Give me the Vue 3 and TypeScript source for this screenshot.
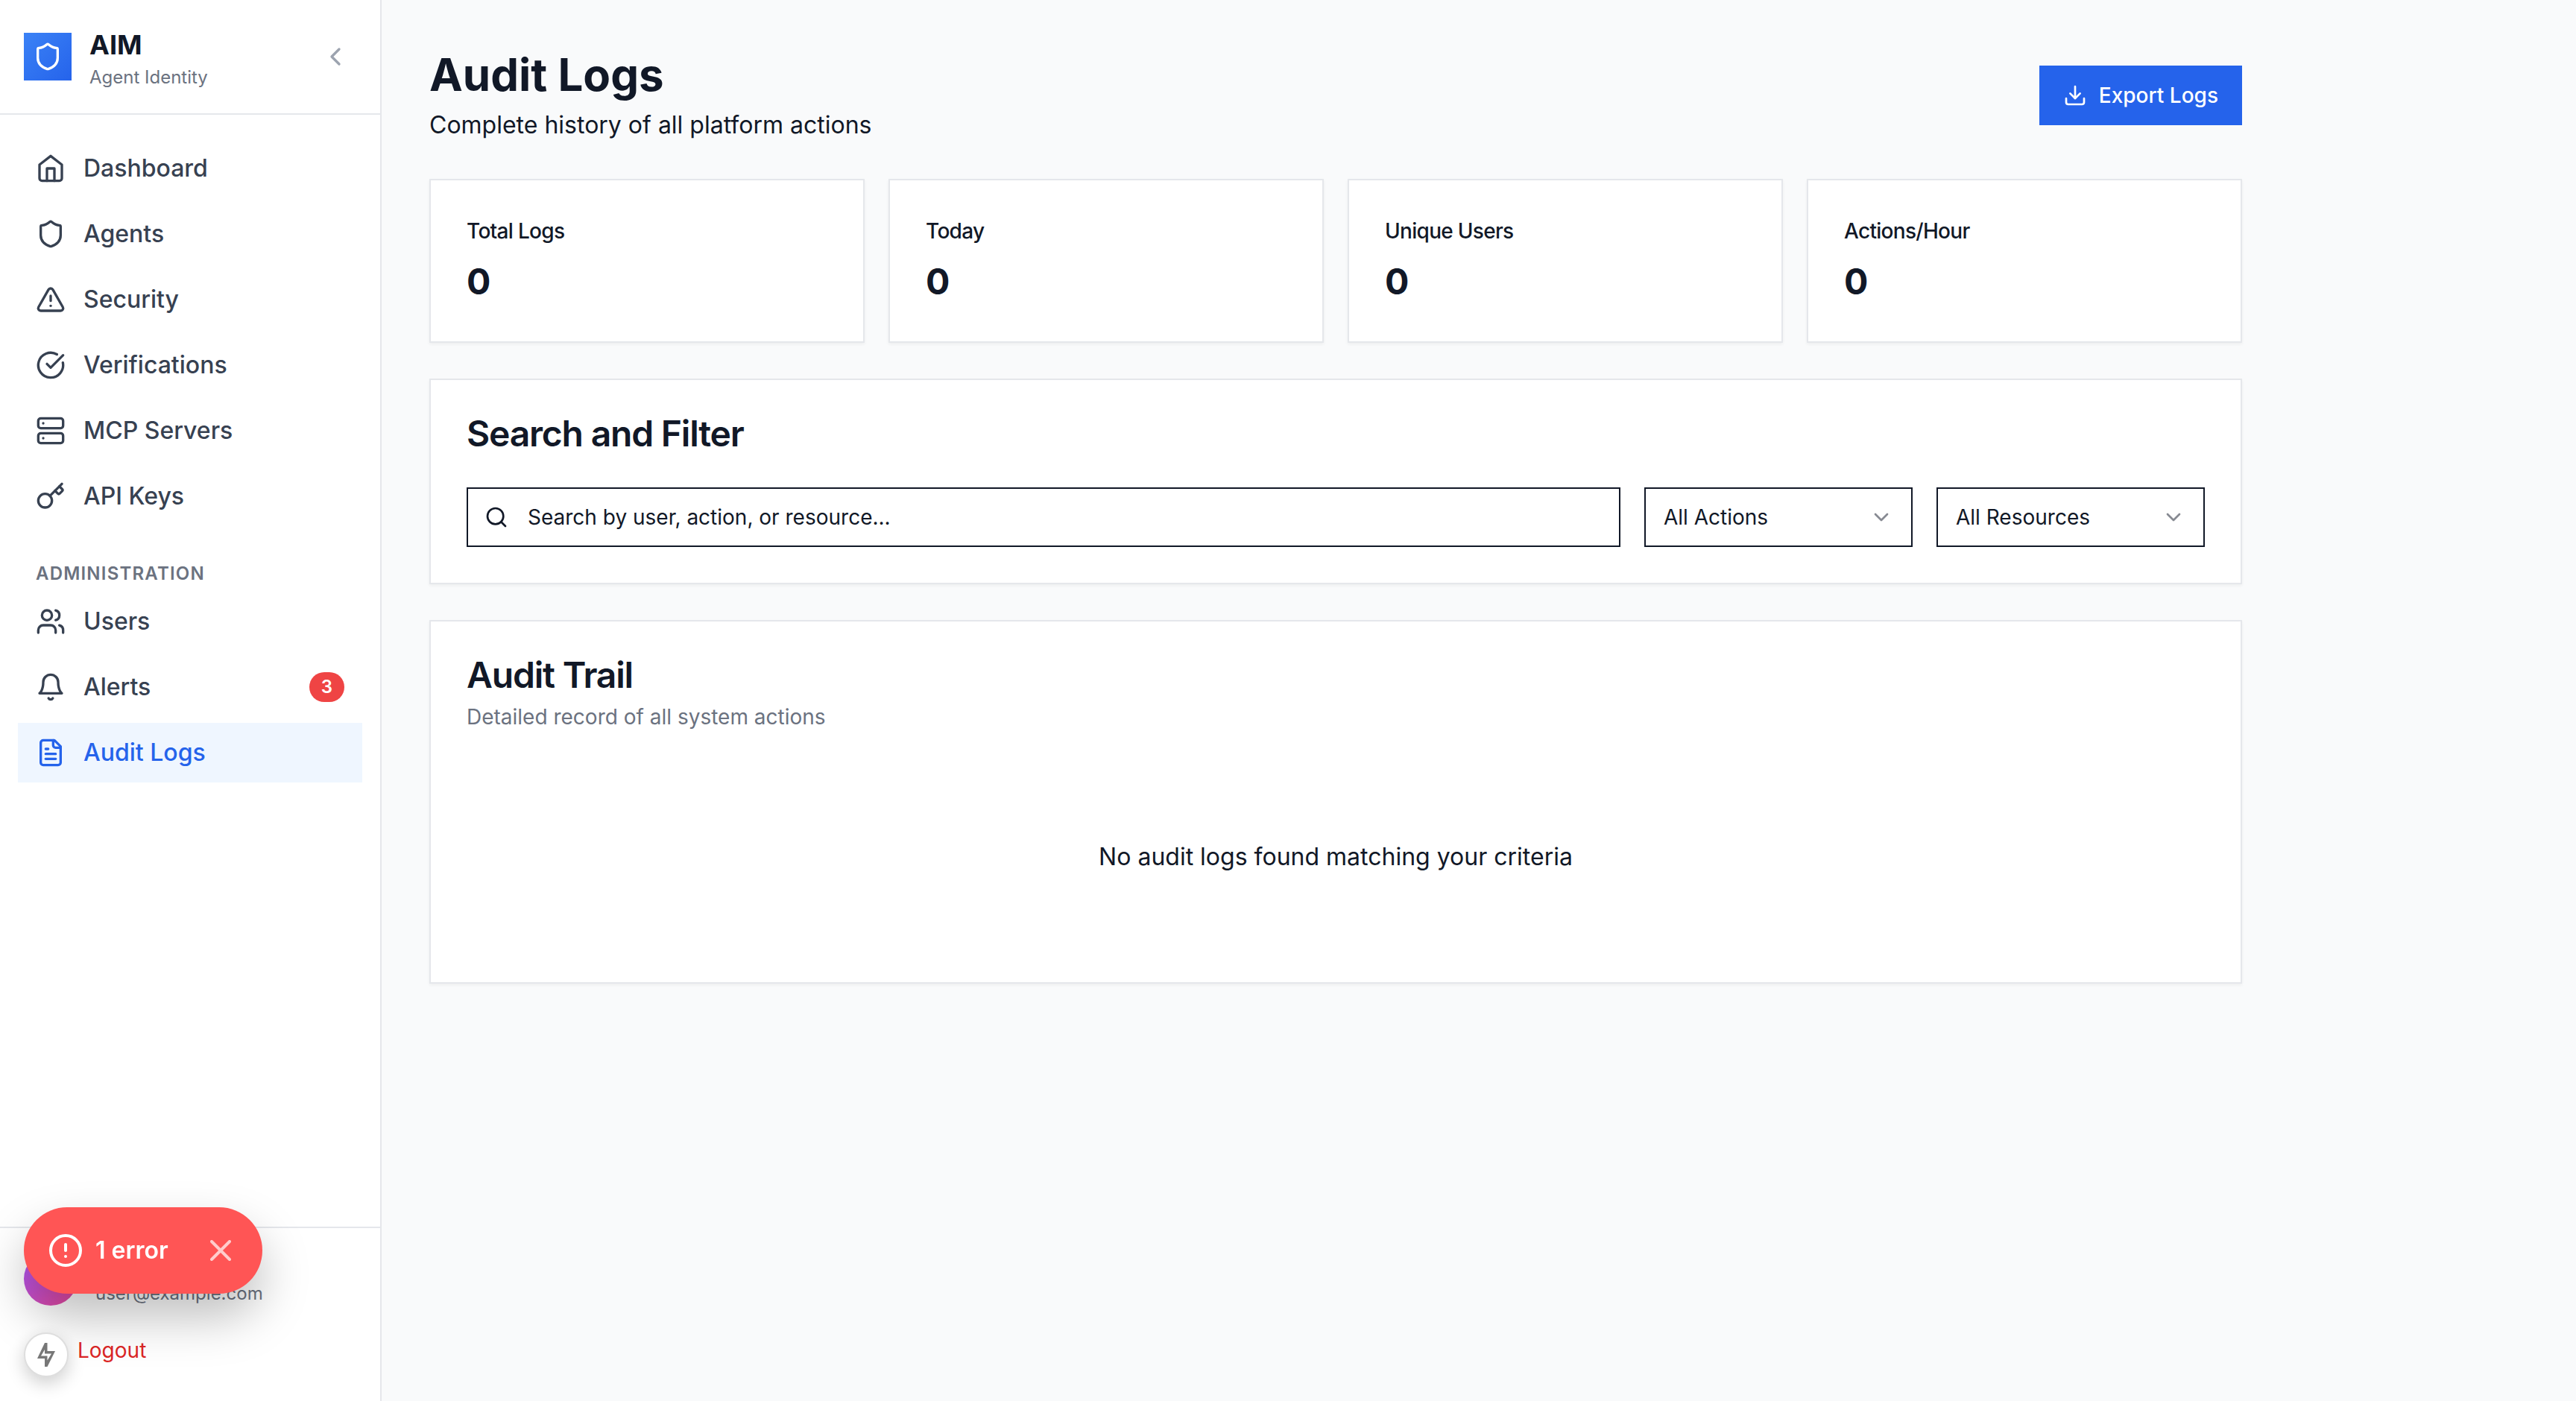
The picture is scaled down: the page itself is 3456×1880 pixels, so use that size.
<script setup lang="ts">
import { ref } from 'vue'

interface NavItem {
  label: string
  icon: string
  badge?: number
  active?: boolean
}

const icons: Record<string, string> = {
  home: '<path d="m3 9 9-7 9 7v11a2 2 0 0 1-2 2H5a2 2 0 0 1-2-2z"/><path d="M9 22V12h6v10"/>',
  shield:
    '<path d="M20 13c0 5-3.5 7.5-7.66 8.95a1 1 0 0 1-.67-.01C7.5 20.5 4 18 4 13V6a1 1 0 0 1 1-1c2 0 4.5-1.2 6.24-2.72a1.17 1.17 0 0 1 1.52 0C14.51 3.81 17 5 19 5a1 1 0 0 1 1 1z"/>',
  alert:
    '<path d="m21.73 18-8-14a2 2 0 0 0-3.48 0l-8 14A2 2 0 0 0 4 21h16a2 2 0 0 0 1.73-3"/><path d="M12 9v4"/><path d="M12 17h.01"/>',
  check: '<path d="M21.801 10A10 10 0 1 1 17 3.335"/><path d="m9 11 3 3L22 4"/>',
  server:
    '<rect width="20" height="8" x="2" y="2" rx="2"/><rect width="20" height="8" x="2" y="14" rx="2"/><path d="M6 6h.01"/><path d="M6 18h.01"/>',
  key: '<path d="m15.5 7.5 2.3 2.3a1 1 0 0 0 1.4 0l2.1-2.1a1 1 0 0 0 0-1.4L19 4"/><path d="m21 2-9.6 9.6"/><circle cx="7.5" cy="15.5" r="5.5"/>',
  users:
    '<path d="M16 21v-2a4 4 0 0 0-4-4H6a4 4 0 0 0-4 4v2"/><circle cx="9" cy="7" r="4"/><path d="M22 21v-2a4 4 0 0 0-3-3.87"/><path d="M16 3.13a4 4 0 0 1 0 7.75"/>',
  bell: '<path d="M6 8a6 6 0 0 1 12 0c0 7 3 9 3 9H3s3-2 3-9"/><path d="M10.3 21a1.94 1.94 0 0 0 3.4 0"/>',
  file: '<path d="M15 2H6a2 2 0 0 0-2 2v16a2 2 0 0 0 2 2h12a2 2 0 0 0 2-2V7Z"/><path d="M14 2v4a2 2 0 0 0 2 2h4"/><path d="M10 9H8"/><path d="M16 13H8"/><path d="M16 17H8"/>',
}

const mainNav: NavItem[] = [
  { label: 'Dashboard', icon: 'home' },
  { label: 'Agents', icon: 'shield' },
  { label: 'Security', icon: 'alert' },
  { label: 'Verifications', icon: 'check' },
  { label: 'MCP Servers', icon: 'server' },
  { label: 'API Keys', icon: 'key' },
]

const adminNav: NavItem[] = [
  { label: 'Users', icon: 'users' },
  { label: 'Alerts', icon: 'bell', badge: 3 },
  { label: 'Audit Logs', icon: 'file', active: true },
]

const stats = [
  { label: 'Total Logs', value: 0 },
  { label: 'Today', value: 0 },
  { label: 'Unique Users', value: 0 },
  { label: 'Actions/Hour', value: 0 },
]

const search = ref('')
const action = ref('all')
const resource = ref('all')
</script>

<template>
  <div class="app">
    <aside class="sidebar">
      <header class="brand">
        <span class="logo">
          <svg class="icon" viewBox="0 0 24 24" aria-hidden="true" v-html="icons.shield"></svg>
        </span>
        <div class="brand-text">
          <div class="brand-name">AIM</div>
          <div class="small muted">Agent Identity</div>
        </div>
        <button class="collapse" type="button" aria-label="Collapse sidebar">
          <svg class="icon" viewBox="0 0 24 24" aria-hidden="true"><path d="m15 18-6-6 6-6" /></svg>
        </button>
      </header>

      <nav class="nav">
        <a v-for="item in mainNav" :key="item.label" class="nav-item" href="#">
          <svg class="icon" viewBox="0 0 24 24" aria-hidden="true" v-html="icons[item.icon]"></svg>
          <span class="nav-label">{{ item.label }}</span>
        </a>
        <h2 class="nav-heading">ADMINISTRATION</h2>
        <a
          v-for="item in adminNav"
          :key="item.label"
          class="nav-item"
          :class="{ active: item.active }"
          :aria-current="item.active ? 'page' : undefined"
          href="#"
        >
          <svg class="icon" viewBox="0 0 24 24" aria-hidden="true" v-html="icons[item.icon]"></svg>
          <span class="nav-label">{{ item.label }}</span>
          <span v-if="item.badge" class="badge">{{ item.badge }}</span>
        </a>
      </nav>

      <footer class="account">
        <div class="profile">
          <span class="avatar"></span>
          <span class="small muted">user@example.com</span>
        </div>
        <button class="logout" type="button">Logout</button>
      </footer>
    </aside>

    <main class="main">
      <div class="content">
        <header class="page-head">
          <div>
            <h1>Audit Logs</h1>
            <p class="lead">Complete history of all platform actions</p>
          </div>
          <button class="export" type="button">
            <svg class="icon icon-sm" viewBox="0 0 24 24" aria-hidden="true">
              <path d="M21 15v4a2 2 0 0 1-2 2H5a2 2 0 0 1-2-2v-4" />
              <path d="m7 10 5 5 5-5" />
              <path d="M12 15V3" />
            </svg>
            Export Logs
          </button>
        </header>

        <section class="stats">
          <article v-for="stat in stats" :key="stat.label" class="card">
            <h3 class="stat-label">{{ stat.label }}</h3>
            <div class="stat-value">{{ stat.value }}</div>
          </article>
        </section>

        <section class="card">
          <h2 class="card-title">Search and Filter</h2>
          <div class="filters">
            <div class="field grow">
              <svg class="icon icon-sm field-lead" viewBox="0 0 24 24" aria-hidden="true">
                <circle cx="11" cy="11" r="8" />
                <path d="m21 21-4.3-4.3" />
              </svg>
              <input
                v-model="search"
                class="control search"
                type="text"
                aria-label="Search logs"
                placeholder="Search by user, action, or resource..."
              />
            </div>
            <div class="field">
              <select v-model="action" class="control" aria-label="Action">
                <option value="all">All Actions</option>
              </select>
              <svg class="icon icon-sm field-trail" viewBox="0 0 24 24" aria-hidden="true"><path d="m6 9 6 6 6-6" /></svg>
            </div>
            <div class="field">
              <select v-model="resource" class="control" aria-label="Resource">
                <option value="all">All Resources</option>
              </select>
              <svg class="icon icon-sm field-trail" viewBox="0 0 24 24" aria-hidden="true"><path d="m6 9 6 6 6-6" /></svg>
            </div>
          </div>
        </section>

        <section class="card">
          <h2 class="card-title">Audit Trail</h2>
          <p class="card-note">Detailed record of all system actions</p>
          <p class="empty">No audit logs found matching your criteria</p>
        </section>
      </div>
    </main>

    <div class="dev-tools">
      <div class="toast" role="alert">
        <svg class="toast-icon" viewBox="0 0 24 24" aria-hidden="true">
          <circle cx="12" cy="12" r="10" />
          <path d="M12 8v4" />
          <path d="M12 16h.01" />
        </svg>
        <span>1 error</span>
        <button class="toast-close" type="button" aria-label="Dismiss">
          <svg class="toast-icon" viewBox="0 0 24 24" aria-hidden="true"><path d="m6 6 12 12M18 6 6 18" /></svg>
        </button>
      </div>
      <span class="bolt">
        <svg viewBox="0 0 24 32" aria-hidden="true">
          <path
            fill-rule="evenodd"
            d="M10 0H13.5V11H24L13.5 32H10V21H0ZM10 9 5 17.5H13.5V23.5L19 14.5H10Z"
          />
        </svg>
      </span>
    </div>
  </div>
</template>

<style>
body {
  margin: 0;
  background: #f9fafb;
}
</style>

<style scoped>
.app {
  display: flex;
  min-height: 100vh;
  background: #f9fafb;
  color: #111827;
  font-family: Inter, 'Liberation Sans', sans-serif;
  font-size: 32px;
  line-height: 48px;
}
.app *,
.app *::before {
  box-sizing: border-box;
}
h1,
h2,
h3,
p {
  margin: 0;
}
button {
  border: 0;
  background: none;
  font: inherit;
  cursor: pointer;
}
.icon {
  flex: none;
  display: block;
  width: 40px;
  height: 40px;
  fill: none;
  stroke: currentColor;
  stroke-width: 2;
  stroke-linecap: round;
  stroke-linejoin: round;
}
.icon-sm {
  width: 32px;
  height: 32px;
}
.small {
  font-size: 24px;
  line-height: 32px;
}
.muted {
  color: #6b7280;
}

.sidebar {
  flex: none;
  display: flex;
  flex-direction: column;
  width: 512px;
  border-right: 2px solid #e5e7eb;
  background: #fff;
}
.brand {
  display: flex;
  align-items: center;
  gap: 24px;
  padding: 32px;
  border-bottom: 2px solid #e5e7eb;
}
.logo {
  display: grid;
  place-items: center;
  width: 64px;
  height: 64px;
  background: linear-gradient(to bottom right, #3b82f6, #2563eb);
  color: #fff;
}
.brand-text {
  flex: 1;
}
.brand-name {
  font-size: 36px;
  line-height: 56px;
  font-weight: 700;
}
.collapse {
  padding: 8px;
  color: #9ca3af;
}

.nav {
  flex: 1;
  display: flex;
  flex-direction: column;
  gap: 8px;
  padding: 32px 24px;
}
.nav-item {
  display: flex;
  align-items: center;
  gap: 24px;
  padding: 16px 24px;
  color: #374151;
  font-weight: 500;
  text-decoration: none;
}
.nav-item.active {
  background: #eff6ff;
  color: #2563eb;
}
.nav-label {
  flex: 1;
}
.nav-heading {
  margin-top: 40px;
  padding: 0 24px;
  color: #6b7280;
  font-size: 24px;
  line-height: 32px;
  font-weight: 600;
  letter-spacing: 0.05em;
}
.badge {
  padding: 4px 16px;
  border-radius: 20px;
  background: #ef4444;
  color: #fff;
  font-size: 24px;
  line-height: 32px;
  font-weight: 600;
}

.account {
  display: flex;
  flex-direction: column;
  gap: 24px;
  padding: 32px;
  border-top: 2px solid #e5e7eb;
}
.profile {
  display: flex;
  align-items: flex-end;
  gap: 24px;
}
.avatar {
  width: 72px;
  height: 72px;
  border-radius: 50%;
  background: linear-gradient(to bottom right, #a855f7, #ec4899);
}
.logout {
  padding: 16px 72px;
  color: #dc2626;
  font-size: 28px;
  line-height: 40px;
  text-align: left;
}

.main {
  flex: 1;
  min-width: 0;
}
.content {
  display: flex;
  flex-direction: column;
  gap: 48px;
  max-width: 2560px;
  padding: 64px;
}
.page-head {
  display: flex;
  align-items: center;
  justify-content: space-between;
}
h1 {
  font-size: 60px;
  line-height: 72px;
  font-weight: 700;
}
.lead {
  margin-top: 8px;
}
.export {
  display: flex;
  align-items: center;
  gap: 16px;
  padding: 20px 32px;
  background: #2563eb;
  color: #fff;
  font-size: 28px;
  line-height: 40px;
  font-weight: 500;
}
.stats {
  display: grid;
  grid-template-columns: repeat(4, 1fr);
  gap: 32px;
}
.card {
  padding: 48px;
  border: 2px solid #e5e7eb;
  background: #fff;
  box-shadow: 0 2px 4px rgba(0, 0, 0, 0.05);
}
.stat-label {
  margin-bottom: 16px;
  font-size: 28px;
  line-height: 40px;
  font-weight: 500;
  letter-spacing: -0.025em;
}
.stat-value {
  font-size: 48px;
  line-height: 64px;
  font-weight: 700;
}
.card-title {
  font-size: 48px;
  line-height: 48px;
  font-weight: 600;
  letter-spacing: -0.025em;
}
.card-note {
  margin-top: 12px;
  color: #6b7280;
  font-size: 28px;
  line-height: 40px;
}
.filters {
  display: flex;
  gap: 32px;
  margin-top: 48px;
}
.field {
  position: relative;
  width: 360px;
}
.field.grow {
  flex: 1;
}
.control {
  display: block;
  width: 100%;
  height: 80px;
  padding: 0 24px;
  border: 2px solid #111827;
  border-radius: 0;
  background: #fff;
  color: #111827;
  font-family: inherit;
  font-size: 28px;
  appearance: none;
}
.control.search {
  padding-left: 80px;
}
.control::placeholder {
  color: #111827;
  opacity: 1;
}
.field-lead,
.field-trail {
  position: absolute;
  top: 24px;
  pointer-events: none;
}
.field-lead {
  left: 24px;
}
.field-trail {
  right: 26px;
  opacity: 0.5;
}
.empty {
  margin-top: 48px;
  padding: 96px 0;
  text-align: center;
}

/* Development overlay floating over the bottom-left corner */
.dev-tools {
  position: fixed;
  left: 32px;
  bottom: 32px;
  display: flex;
  flex-direction: column;
  align-items: flex-start;
  gap: 52px;
}
.toast {
  display: flex;
  align-items: center;
  height: 116px;
  padding: 0 32px;
  border-radius: 58px;
  background: #ff5555;
  color: #fff;
  font-weight: 600;
  box-shadow: 0 32px 64px rgba(0, 0, 0, 0.25);
}
.toast-icon {
  display: block;
  width: 48px;
  height: 48px;
  fill: none;
  stroke: currentColor;
  stroke-width: 2;
  stroke-linecap: round;
  stroke-linejoin: round;
}
.toast span {
  margin: 0 46px 0 16px;
}
.toast-close {
  padding: 0;
  color: #fff;
  opacity: 0.7;
}
.bolt {
  display: grid;
  place-items: center;
  width: 60px;
  height: 60px;
  border: 2px solid #dedede;
  border-radius: 50%;
  background: #fff;
  box-shadow: 0 8px 24px rgba(0, 0, 0, 0.2);
}
.bolt svg {
  width: 24px;
  height: 32px;
  fill: #777;
}
</style>
